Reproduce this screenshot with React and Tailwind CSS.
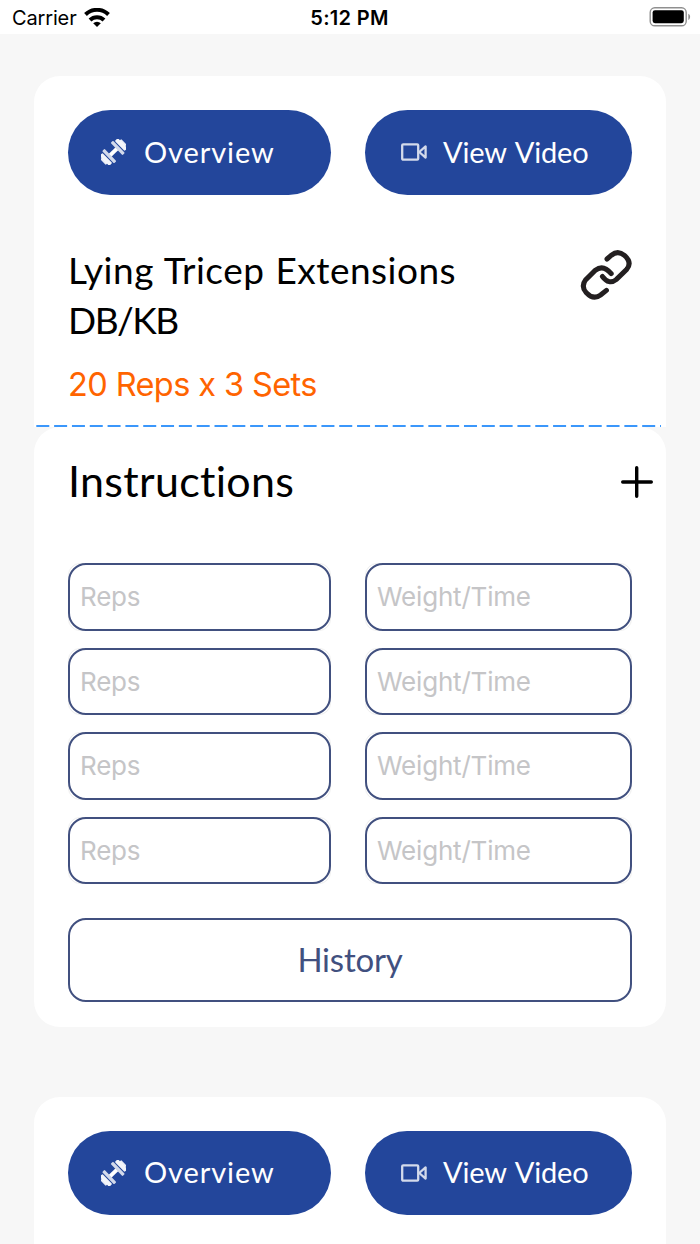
const SETS = [1, 2, 3, 4];

function WifiIcon() {
  return (
    <svg width="26" height="19" viewBox="0 0 26 19">
      <g fill="none" stroke="#000" strokeWidth="4">
        <path d="M1.5 6.5A16.5 16.5 0 0 1 24.5 6.5" />
        <path d="M6 12A10 10 0 0 1 20 12" />
      </g>
      <path d="M13 19L9.2 15.3A5.4 5.4 0 0 1 16.8 15.3Z" />
    </svg>
  );
}

function BatteryIcon() {
  return (
    <svg width="42" height="20" viewBox="0 0 42 20">
      <rect x="1.2" y="0.8" width="36" height="18" rx="4.6" fill="none" stroke="#8f8f8f" strokeWidth="1.4" />
      <rect x="3.6" y="3.2" width="31.2" height="13" rx="2.4" />
      <path d="M39.3 6.7C41.7 7.6 41.7 12 39.3 12.9Z" fill="#8f8f8f" />
    </svg>
  );
}

function DumbbellIcon() {
  return (
    <svg width="25" height="26" viewBox="0 0 25 26">
      <g transform="translate(12.5 13) rotate(-44)" fill="#fff">
        <rect x="-4.5" y="-2" width="9" height="4" />
        <rect x="-7.6" y="-8.6" width="3.4" height="17.2" rx="1" opacity=".8" />
        <rect x="4.2" y="-8.6" width="3.4" height="17.2" rx="1" opacity=".8" />
        <rect x="-12.8" y="-7" width="4.2" height="14" rx="1" opacity=".95" />
        <rect x="8.6" y="-7" width="4.2" height="14" rx="1" opacity=".95" />
        <rect x="-14.6" y="-4" width="2.4" height="8" rx="1" opacity=".9" />
        <rect x="12.2" y="-4" width="2.4" height="8" rx="1" opacity=".9" />
      </g>
    </svg>
  );
}

function VideoIcon() {
  return (
    <svg width="26" height="18" viewBox="0 0 26 18" fill="none" stroke="#d3daeb" strokeWidth="2.3" strokeLinejoin="round">
      <rect x="1.2" y="1.3" width="16" height="15.4" rx="1" />
      <path d="M18.2 9L24.6 3.4V14.6Z" />
    </svg>
  );
}

function LinkIcon() {
  return (
    <svg width="52" height="52" viewBox="0 0 52 52" fill="none" stroke="#231f20" strokeWidth="5" strokeLinecap="round">
      <path d="M27 10L31.4 6.2Q38 .8 44.4 6.4Q52.4 13.4 46.8 20.2L36.2 30.6Q29 36.2 22.4 27.4" />
      <path d="M31.2 24.6Q23.2 15 15.4 21.2L5.8 30.6Q.6 37.4 6.2 43.6Q13.4 51.4 20.6 46L26.4 41.4" />
    </svg>
  );
}

function StatusBar() {
  return (
    <header className="grid h-[34px] grid-cols-3 items-center bg-white pl-3 pr-[9px] font-['Inter',sans-serif] text-[20px] text-black">
      <div className="flex items-center gap-[7px]">
        <span className="pt-[2px] tracking-[-0.15px]">Carrier</span>
        <WifiIcon />
      </div>
      <span className="-ml-[4px] pt-[2px] text-center font-semibold tracking-[0.3px]">5:12 PM</span>
      <div className="flex justify-end">
        <BatteryIcon />
      </div>
    </header>
  );
}

function ActionButtons() {
  return (
    <div className="grid h-[84.5px] grid-cols-[263px_267px] gap-[34px] text-[29px] leading-none text-white">
      <button className="flex items-center rounded-full bg-[#23469b] pl-[33px]">
        <DumbbellIcon />
        <span className="ml-[18px] pb-[2px] tracking-[0.9px]">Overview</span>
      </button>
      <button className="flex items-center rounded-full bg-[#23469b] pl-[36px]">
        <VideoIcon />
        <span className="ml-[16px] pb-[2px] tracking-[-0.2px] [word-spacing:2.5px]">View Video</span>
      </button>
    </div>
  );
}

function Field({ placeholder }) {
  return (
    <div className="h-[67.5px] rounded-[12px] border border-[#eeeeee]">
      <input
        type="text"
        placeholder={placeholder}
        className="-m-px block h-[67.5px] w-[calc(100%+2px)] rounded-[18px] border-2 border-[#41507f] px-[10px] tracking-[-0.2px] placeholder:text-[#c5c5c7] placeholder:opacity-100"
      />
    </div>
  );
}

export default function App() {
  return (
    <div className="h-[1244px] w-[700px] overflow-hidden bg-[#f7f7f7] font-['Lato',sans-serif] text-black">
      <StatusBar />

      <main className="px-[34px] pt-[42px]">
        <section className="h-[351px] rounded-t-[26px] bg-white px-[34px] pt-[34px]">
          <ActionButtons />
          <div className="mt-[50.5px] flex justify-between">
            <h1 className="w-[420px] text-[37px] leading-[50px] tracking-[0.5px] [word-spacing:1px]">
              Lying Tricep Extensions <span className="tracking-[-1.5px]">DB/KB</span>
            </h1>
            <div className="pt-[3.5px]">
              <LinkIcon />
            </div>
          </div>
          <p className="mt-[20px] font-['Inter',sans-serif] text-[32.5px] leading-[40px] tracking-[-0.6px] text-[#ff6400]">
            20 Reps x 3 Sets
          </p>
          <svg className="-ml-[32px] mt-[19px] block" width="626" height="3">
            <path d="M0.3 2H625" stroke="#3b97fb" strokeWidth="2" strokeDasharray="13 4.82" />
          </svg>
        </section>

        <section className="h-[600px] rounded-[26px] bg-white px-[34px] pt-[24px]">
          <div className="-mr-[21px] flex items-center justify-between">
            <h2 className="text-[43px] leading-[60px] tracking-[0.3px]">Instructions</h2>
            <svg className="mt-[2px]" width="32" height="32" stroke="#000" strokeWidth="3.4" strokeLinecap="round">
              <path d="M15.7 1.7V30.3M1.7 16H30.3" />
            </svg>
          </div>

          <div className="mt-[52px] grid grid-cols-[263px_267px] gap-x-[34px] gap-y-[17px] font-['Inter',sans-serif] text-[26px]">
            {SETS.map((set) => [
              <Field key={`reps-${set}`} placeholder="Reps" />,
              <Field key={`weight-${set}`} placeholder="Weight/Time" />,
            ])}
          </div>

          <button className="mt-[34px] h-[84px] w-full rounded-[18px] border-2 border-[#41507f] text-[33px] tracking-[-0.2px] text-[#41507f]">
            History
          </button>
        </section>

        <section className="mt-[70px] h-[351px] rounded-t-[26px] bg-white px-[34px] pt-[33.5px]">
          <ActionButtons />
        </section>
      </main>
    </div>
  );
}
